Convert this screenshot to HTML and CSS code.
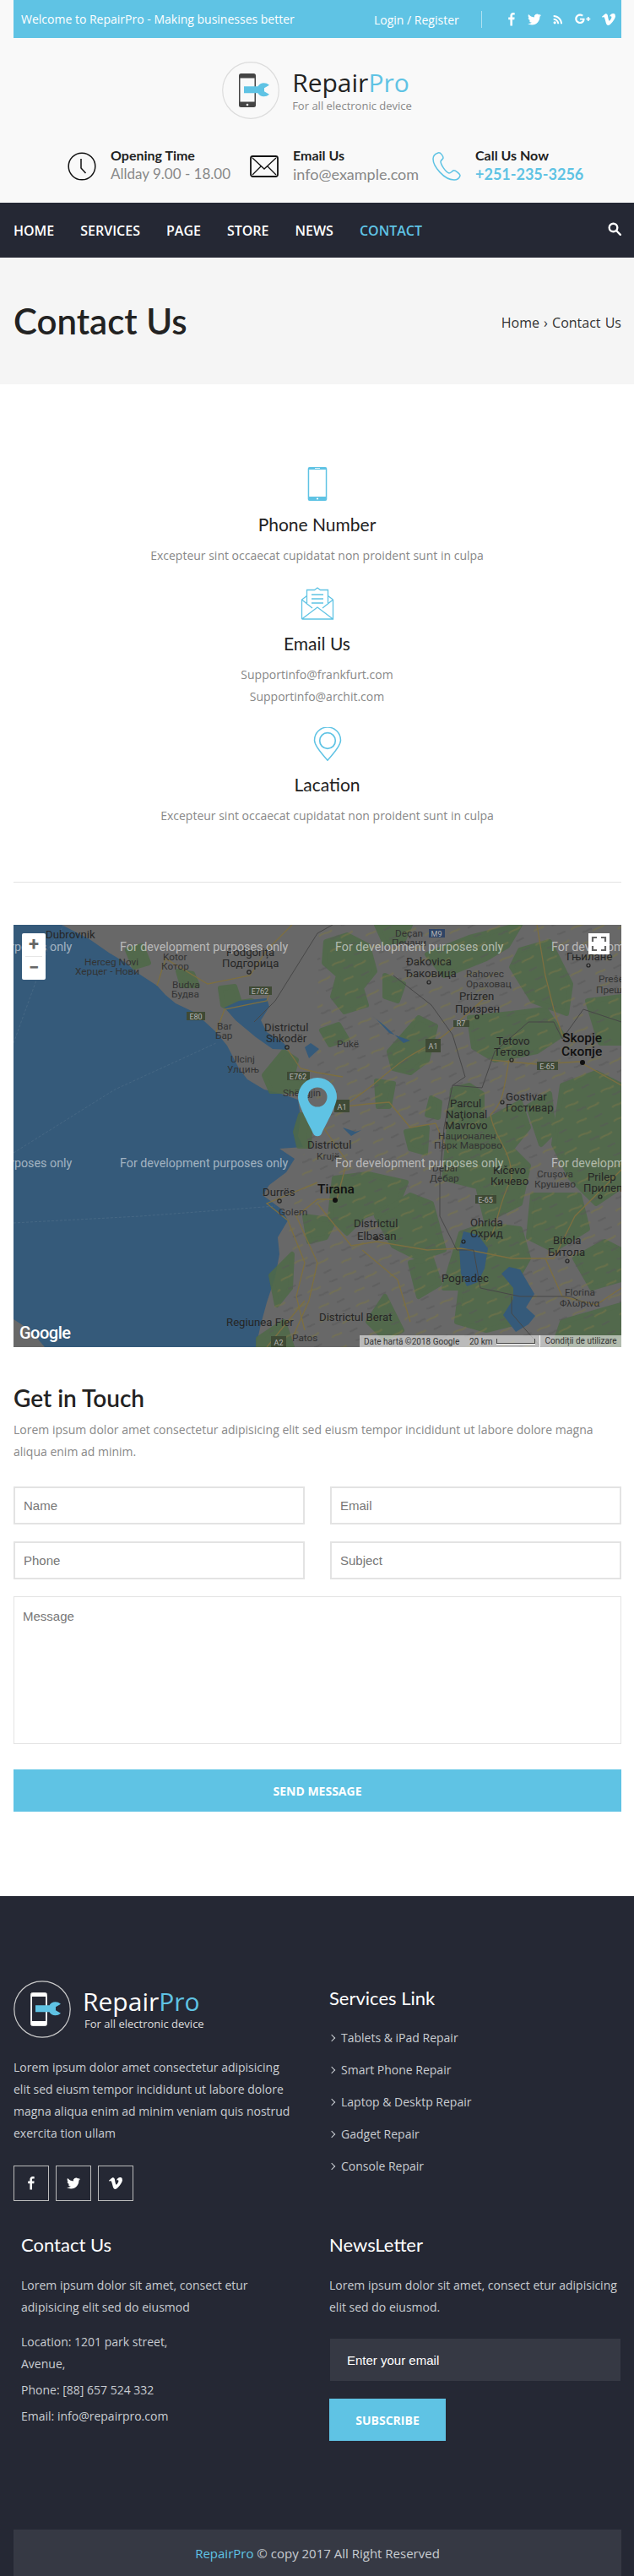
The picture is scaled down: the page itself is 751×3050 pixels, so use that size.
FILE: index.html
```html
<!DOCTYPE html>
<html lang="en">
<head>
  <meta charset="UTF-8" />
  <meta name="viewport" content="width=device-width, initial-scale=1.0"/>
  <title>RepairPro - Contact Us</title>
  <link rel="stylesheet" href="styles.css">
</head>
<body>

  <!-- Shared icons -->
  <svg class="defs" width="0" height="0">
    <symbol id="i-fb" viewBox="0 0 16 16"><path d="M9 8.200h2.300l.3-2.700H9V3.900c0-.8.2-1.300 1.300-1.300h1.400V.2C11.400.2 10.600.1 9.700.1 7.800.1 6.400 1.300 6.400 3.500v2H4.200v2.700h2.200v7.300H9z"/></symbol>
    <symbol id="i-tw" viewBox="0 0 24 24"><path d="M23.950 4.570a10 10 0 0 1-2.820.77 4.960 4.960 0 0 0 2.160-2.720c-.95.55-2 .96-3.120 1.190a4.920 4.920 0 0 0-8.380 4.480C7.690 8.100 4.070 6.130 1.640 3.160a4.820 4.820 0 0 0-.66 2.480c0 1.710.87 3.210 2.190 4.100a4.900 4.900 0 0 1-2.230-.62v.06a4.920 4.920 0 0 0 3.950 4.830 5 5 0 0 1-2.210.08 4.940 4.940 0 0 0 4.600 3.420A9.870 9.870 0 0 1 0 19.540a14 14 0 0 0 7.560 2.210c9.050 0 14-7.500 14-13.980 0-.21 0-.42-.02-.63a9.940 9.940 0 0 0 2.460-2.550z"/></symbol>
    <symbol id="i-vm" viewBox="0 0 24 24"><path d="M23.980 6.400c-.1 2.340-1.730 5.540-4.890 9.610-3.270 4.240-6.030 6.360-8.290 6.360-1.400 0-2.580-1.290-3.550-3.870L5.310 11.400C4.590 8.820 3.820 7.530 3 7.530c-.18 0-.81.38-1.880 1.130L0 7.210c1.180-1.040 2.340-2.080 3.490-3.120C5.060 2.730 6.240 2.010 7.030 1.940c1.860-.18 3 1.090 3.430 3.800.46 2.750.78 4.460.96 5.130.54 2.440 1.130 3.660 1.770 3.660.5 0 1.250-.79 2.250-2.360 1-1.580 1.530-2.780 1.600-3.600.14-1.360-.4-2.040-1.600-2.040-.57 0-1.150.13-1.750.39 1.160-3.810 3.380-5.660 6.660-5.550 2.430.07 3.580 1.650 3.430 4.730z"/></symbol>
    <symbol id="i-wrench" viewBox="0 0 68 68"><path d="M26 29.300h16.500c1.500-2.500 4-4 7-4 2.500 0 4.500.8 6.500 2.500l-6 3.500v4l6 3.500c-2 1.700-4 2.500-6.500 2.500-3 0-5.500-1.500-7-4H26z"/></symbol>
  </svg>

  <!-- Header -->
  <header class="site-header">
    <div class="topbar">
      <span class="topbar-text">Welcome to RepairPro - Making businesses better</span>
      <a class="topbar-login">Login / Register</a>
      <div class="topbar-social">
        <svg class="soc soc-f"><use href="#i-fb"/></svg>
        <svg class="soc soc-t"><use href="#i-tw"/></svg>
        <svg class="soc soc-r" viewBox="0 0 24 24"><circle cx="6.200" cy="17.800" r="2.400"/><path d="M4 4.400v3c7 0 12.600 5.600 12.600 12.600h3C19.600 11.400 12.600 4.400 4 4.400zm0 5.700v3c3.800 0 6.900 3.100 6.900 6.900h3c0-5.500-4.400-9.900-9.900-9.900z"/></svg>
        <svg class="soc soc-g" viewBox="0 0 24 24"><path d="M7.600 10.900v2.500h4.100c-.2 1-1.200 3-4.100 3-2.500 0-4.500-2-4.500-4.600s2-4.600 4.500-4.600c1.400 0 2.400.6 2.900 1.100l2-1.900C11.200 5.200 9.600 4.500 7.600 4.500 3.500 4.500.3 7.800.3 11.800s3.200 7.300 7.300 7.300c4.200 0 7-3 7-7.100 0-.5 0-.8-.1-1.100zM21 10.900V8.800h-2.100v2.100h-2.100V13h2.100v2.100H21V13h2.100v-2.100z"/></svg>
        <svg class="soc soc-v"><use href="#i-vm"/></svg>
      </div>
    </div>

    <div class="brand">
      <svg class="brand-logo" viewBox="0 0 68 68">
        <circle cx="34" cy="34" r="33.300" fill="none" stroke="#dcdcdc" stroke-width="1.200"/>
        <rect x="20" y="14" width="20" height="40" rx="2.500" fill="#444"/>
        <rect x="21.500" y="19.500" width="17" height="28" fill="#f9f9f9"/>
        <circle cx="30" cy="51" r="1.300" fill="#fff"/>
        <use href="#i-wrench" fill="#5fc3e4"/>
      </svg>
      <div>
        <div class="brand-name">Repair<span class="blue">Pro</span></div>
        <div class="brand-sub">For all electronic device</div>
      </div>
    </div>

    <div class="info-row">
      <div class="info-item">
        <svg class="info-icon" viewBox="0 0 34 34" fill="none" stroke="#111" stroke-width="1.500"><circle cx="17" cy="17" r="15.800"/><path d="M16 8v11l5.500 6"/></svg>
        <div>
          <div class="info-title">Opening Time</div>
          <div class="info-text info-hours">Allday 9.00 - 18.00</div>
        </div>
      </div>
      <div class="info-item">
        <svg class="info-icon" viewBox="0 0 34 34" fill="none" stroke="#111"><rect x="1" y="5" width="32" height="24" rx="2.500" stroke-width="1.800"/><path d="M3 7l14 13L31 7M3 27l10-10M31 27L21 17" stroke-width="1.300"/></svg>
        <div>
          <div class="info-title">Email Us</div>
          <div class="info-text">info@example.com</div>
        </div>
      </div>
      <div class="info-item info-call">
        <svg class="info-icon" viewBox="0 0 34 34" fill="none" stroke="#5fc3e4" stroke-width="1.500"><path d="M7 1C4 2 1 4 1 8c0 9 13 25 25 25 3 0 6-2 7-5 0-2-6-7-8-6-2 1-3 3-5 3-4-1-10-10-10-14 1-2 3-3 3-4 0-2-3-7-6-6z"/></svg>
        <div>
          <div class="info-title">Call Us Now</div>
          <div class="info-text info-phone">+251-235-3256</div>
        </div>
      </div>
    </div>
  </header>

  <!-- Nav -->
  <nav class="main-nav">
    <a>Home</a>
    <a>Services</a>
    <a>Page</a>
    <a>Store</a>
    <a>News</a>
    <a class="active">Contact</a>
    <svg class="nav-search" viewBox="0 0 16 16" fill="none" stroke="#fff" stroke-width="2.400"><circle cx="6.500" cy="6.500" r="4.800"/><path d="M10 10l4.800 4.800" stroke-linecap="round"/></svg>
  </nav>

  <!-- Page title -->
  <section class="page-title">
    <h1>Contact Us</h1>
    <div class="crumbs">Home &rsaquo; Contact Us</div>
  </section>

  <!-- Contact details -->
  <section class="contact-list">
    <div class="contact-item">
      <svg class="contact-icon" viewBox="0 0 40 40" fill="none" stroke="#5fc3e4">
        <rect x="8.700" y="0" width="22.600" height="40" rx="2" fill="#5fc3e4" stroke="none"/>
        <rect x="10.200" y="3" width="19.600" height="32" fill="#fff" stroke="none"/>
        <path d="M17 1.500h6" stroke="#fff" stroke-width=".8"/>
        <circle cx="20" cy="37.500" r="1.100" fill="#fff" stroke="none"/>
      </svg>
      <h3>Phone Number</h3>
      <p>Excepteur sint occaecat cupidatat non proident sunt in culpa</p>
    </div>
    <div class="contact-item">
      <svg class="contact-icon" viewBox="0 0 40 40" fill="none" stroke="#5fc3e4" stroke-width="1.300">
        <path d="M1.500 39V16l6-4.500M38.500 16v23H1.500M38.500 16l-6-4.500M1.500 16L14 26M38.500 16L26 26M1.500 39L20 25l18.500 14"/>
        <path d="M7.500 20V4.500h9L20 2l3.500 2.500h9V20"/>
        <path d="M13 10h14M13 15h14M13 20h14" stroke-width="1.700"/>
      </svg>
      <h3>Email Us</h3>
      <p>Supportinfo@frankfurt.com<br>Supportinfo@archit.com</p>
    </div>
    <div class="contact-item contact-shift">
      <svg class="contact-icon" viewBox="0 0 40 40" fill="none" stroke="#5fc3e4" stroke-width="1.500">
        <path d="M20 39.200C15 33 4.500 23 4.500 15.500a15.500 15.500 0 0 1 31 0C35.500 23 25 33 20 39.200z"/>
        <circle cx="20" cy="16" r="9.300" stroke-width="1.700"/>
      </svg>
      <h3>Lacation</h3>
      <p>Excepteur sint occaecat cupidatat non proident sunt in culpa</p>
    </div>
  </section>

  <hr class="rule">

  <!-- Map -->
  <section class="map">
    <svg class="map-art" viewBox="0 0 720 500" width="720" height="500">
      <defs>
        <pattern id="terrain" width="46" height="38" patternUnits="userSpaceOnUse" patternTransform="rotate(-24)">
          <path d="M3 8c6-4 11 2 17-1M26 20c5-3 9 1 16-2M8 30c4-3 9 1 13-1" fill="none" stroke="#7a7648" stroke-width="2"/>
          <path d="M14 16c5 2 8-1 12 1M32 6c3 2 6 0 10 1M30 32c4 1 7-1 10 0" fill="none" stroke="#585858" stroke-width="2"/>
        </pattern>
      </defs>
      <rect width="720" height="500" fill="#355a7a"/>
      <!-- land -->
      <path fill="#686868" d="M57 0L90 17 113 33 133 45 147 57 170 72 180 83 192 93 213 103 227 115 240 127 253 143 267 170 277 183 297 195 317 200 337 207 340 227 337 250 343 263 315 265 333 277 323 293 303 308 295 320 318 337 325 350 313 370 315 390 310 417 300 447 293 473 287 500 720 500 720 0z"/>
      <path fill="#686868" d="M0 467L20 480 37 500 0 500z"/>
      <!-- green -->
      <g class="green">
        <path d="M370 20L395 12 420 25 428 55 412 75 418 95 392 103 378 85 385 60 368 45z"/>
        <path d="M430 0L470 0 462 18 440 22z"/>
        <path d="M297 178L320 150 335 160 330 180 345 185 335 197 305 197z"/>
        <path d="M245 75L262 73 268 92 282 90 290 95 265 105 248 95z"/>
        <path d="M135 30L152 25 160 45 143 50z"/>
        <path d="M195 55L212 58 218 72 200 72z"/>
        <path d="M340 225L352 228 350 262 338 262 334 245z"/>
        <path d="M305 415L330 390 328 430 312 450z"/>
        <path d="M290 490L320 470 330 500 290 500z"/>
        <path d="M430 185L450 188 445 215 432 215z"/>
        <path d="M495 205L505 210 503 228 490 225z"/>
        <path d="M465 245L490 240 488 270 470 265z"/>
        <path d="M380 300L420 295 465 305 455 330 415 345 395 365 375 345z"/>
        <path d="M345 345L380 350 370 370 350 375z"/>
        <path d="M430 345L470 320 495 330 510 385 480 395 450 380z"/>
        <path d="M445 150L480 110 500 120 490 160 470 175 450 170z"/>
        <path d="M520 195L540 190 555 200 555 235 600 210 610 240 590 265 610 285 600 330 560 350 550 310 510 300 515 250z"/>
        <path d="M540 110L590 105 630 100 650 130 620 150 570 160 545 145z"/>
        <path d="M600 30L635 20 660 70 655 105 615 90 590 50z"/>
        <path d="M490 35L540 15 600 0 585 25 560 40 510 60z"/>
        <path d="M650 190L690 175 720 190 720 310 690 330 660 300 640 260z"/>
        <path d="M615 320L670 320 680 360 640 385 610 370z"/>
        <path d="M530 365L560 355 600 360 610 395 590 430 600 470 560 480 525 470 530 430 510 430z"/>
        <path d="M650 470L720 450 720 500 640 500z"/>
        <path d="M680 90L720 85 720 140 695 140z"/>
        <path d="M420 470L440 440 460 480 440 490z"/>
        <path d="M610 215L635 200 640 245 625 260z"/>
        <path d="M440 60L462 70 455 90 440 85z"/>
        <path d="M365 125L385 118 395 135 375 142z"/>
        <path d="M470 400L495 395 505 425 480 440z"/>
        <path d="M665 395L700 375 720 385 720 420 685 430z"/>
      </g>
      <!-- relief -->
      <path fill="url(#terrain)" opacity=".55" d="M360 0H720V500H300L345 265 360 200z"/>
      <!-- lakes -->
      <g fill="#355a7a">
        <path d="M250 98L267 90 300 87 303 97 293 113 300 127 320 140 327 148 307 147 287 133 263 113z"/>
        <path d="M533 363L550 367 562 383 558 407 550 423 537 428 530 413 528 383z"/>
        <path d="M587 405L600 408 617 437 607 453 618 463 610 473 595 482 580 462 592 443 592 430 578 413z"/>
        <path d="M390 240L405 245 412 243 400 250z"/>
        <path d="M345 145L352 140 362 147 350 158z"/>
        <path d="M425 108L438 118 462 140 470 137 445 128 430 112z"/>
      </g>
      <!-- roads -->
      <g fill="none" stroke="#7d6f40" stroke-width="1.300">
        <path d="M393 213C430 190 445 170 470 155S510 135 530 112L560 85"/>
        <path d="M393 215L420 212 445 210 470 240 500 235 515 270"/>
        <path d="M360 230L395 280 383 325 360 325 335 345 360 400 350 445 330 490"/>
        <path d="M360 330L400 380 430 375 490 385 530 383 590 395 640 395 665 345 720 290"/>
        <path d="M565 160L620 165 670 162 720 190"/>
        <path d="M587 160C580 200 580 210 565 225 570 255 590 265 590 300 570 340 575 360 560 375"/>
        <path d="M630 395L650 440 690 450 720 430"/>
        <path d="M620 0L630 60 640 100 650 130 665 140"/>
        <path d="M170 72L180 40 230 70 280 60 300 30 330 0"/>
        <path d="M240 127L250 100 300 90 305 75"/>
        <path d="M323 145L340 170 360 175 390 180"/>
        <path d="M360 305L300 330 325 350 345 400 335 440 345 480"/>
        <path d="M345 445L300 500"/>
        <path d="M413 385L455 420 470 470"/>
      </g>
      <!-- borders -->
      <g fill="none" stroke="#474747" stroke-width="1">
        <path d="M285 115L310 90 360 10 378 0"/>
        <path d="M450 60L495 95 520 130 535 180 520 190 555 193 570 150 610 115 640 115 650 135 675 100 720 115"/>
        <path d="M520 190L510 240 505 300 505 345 525 385 545 385 553 430 600 440 630 440 660 440 680 450"/>
        <path d="M590 440L590 460 607 480 625 500"/>
      </g>
      <g fill="none" stroke="#4a6b86" stroke-width=".8" stroke-dasharray="3 2">
        <path d="M0 140L40 30 60 0"/>
        <path d="M0 270L120 195 240 140"/>
        <path d="M0 353L150 345 310 333"/>
      </g>

      <!-- shields -->
      <g class="shield">
        <rect x="279" y="73" width="27" height="10"/><rect x="205" y="103" width="22" height="10"/>
        <rect x="324" y="174" width="27" height="10"/><rect x="488" y="135" width="18" height="16"/>
        <rect x="380" y="207" width="18" height="15"/><rect x="521" y="113" width="19" height="8"/>
        <rect x="620" y="162" width="25" height="10"/><rect x="547" y="320" width="25" height="10"/>
        <rect x="305" y="487" width="18" height="13"/><rect class="shield-blue" x="492" y="5" width="19" height="10"/>
      </g>
      <g class="shield-text">
        <text x="292" y="82">E762</text><text x="216" y="112">E80</text><text x="337" y="183">E762</text>
        <text x="497" y="147">A1</text><text x="389" y="219">A1</text><text x="530" y="120">R7</text>
        <text x="632" y="171">E-65</text><text x="559" y="329">E-65</text><text x="314" y="498">A2</text><text x="501" y="14">M9</text>
      </g>

      <!-- labels -->
      <g class="lbl">
        <text x="84" y="48">Herceg Novi</text><text x="73" y="59">Херцег - Нови</text>
        <text x="177" y="42">Kotor</text><text x="175" y="53">Котор</text><text x="188" y="75">Budva</text><text x="187" y="86">Будва</text>
        <text x="241" y="124">Bar</text><text x="239" y="135">Бар</text><text x="257" y="163">Ulcinj</text>
        <text x="253" y="175">Улцињ</text><text x="319" y="203">Shëngjin</text><text x="314" y="344">Golem</text>
        <text x="330" y="493">Patos</text><text x="359" y="278">Krujë</text>
        <text x="452" y="14">Deçan</text><text x="448" y="25">Печани</text><text x="536" y="62">Rahovec</text>
        <text x="536" y="74">Ораховац</text><text x="383" y="145">Pukë</text>
        <text x="503" y="254">Национален</text><text x="498" y="265">Парк Маврово</text><text x="496" y="292">Debar</text>
        <text x="493" y="304">Дебар</text><text x="620" y="299">Crușova</text><text x="617" y="311">Крушево</text>
        <text x="653" y="439">Florina</text><text x="647" y="452">Φλώρινα</text>
        <text x="693" y="68">Preševo</text><text x="690" y="81">Прешево</text>
      </g>
      <g class="lbl lbl-mid">
        <text x="38" y="16">Dubrovnik</text><text x="252" y="37">Podgorița</text><text x="247" y="50">Подгорица</text>
        <text x="348" y="265">Districtul</text><text x="572" y="142">Tetovo</text><text x="569" y="155">Тетово</text>
        <text x="583" y="208">Gostivar</text><text x="583" y="221">Гостивар</text><text x="517" y="216">Parcul</text>
        <text x="512" y="229">Naţional</text><text x="511" y="242">Mavrovo</text><text x="568" y="295">Kičevo</text>
        <text x="565" y="308">Кичево</text><text x="680" y="303">Prilep</text><text x="675" y="316">Прилеп</text>
        <text x="541" y="357">Ohrida</text><text x="541" y="370">Охрид</text><text x="639" y="378">Bitola</text>
        <text x="633" y="392">Битола</text><text x="507" y="423">Pogradec</text><text x="655" y="42">Гњилане</text>
        <text x="252" y="475">Regiunea Fier</text><text x="362" y="469">Districtul Berat</text><text x="403" y="358">Districtul</text>
        <text x="407" y="373">Elbasan</text><text x="465" y="48">Đakovica</text><text x="463" y="62">Ђаковица</text>
        <text x="528" y="89">Prizren</text><text x="523" y="104">Призрен</text><text x="297" y="126">Districtul</text>
        <text x="299" y="139">Shkodër</text><text x="295" y="321">Durrës</text>
      </g>
      <g class="lbl-big">
        <text x="650" y="139">Skopje</text><text x="649" y="155">Скопје</text><text x="360" y="318">Tirana</text>
      </g>
      <g fill="none" stroke="#222" stroke-width="1.200">
        <circle cx="279" cy="56" r="2.200"/><circle cx="324" cy="145" r="2.200"/><circle cx="315" cy="327" r="2.200"/>
        <circle cx="492" cy="68" r="2"/><circle cx="549" cy="109" r="2"/><circle cx="590" cy="160" r="2"/>
        <circle cx="579" cy="210" r="2"/><circle cx="430" cy="371" r="2"/><circle cx="656" cy="398" r="2"/>
        <circle cx="681" cy="48" r="2"/><circle cx="695" cy="322" r="2"/><circle cx="533" cy="375" r="2"/>
      </g>
      <g fill="#111"><circle cx="674" cy="163" r="3"/><circle cx="381" cy="326" r="3"/></g>

      <!-- watermark -->
      <g class="watermark">
        <text x="-130" y="31">For development purposes only</text><text x="126" y="31">For development purposes only</text>
        <text x="381" y="31">For development purposes only</text><text x="637" y="31">For development purposes only</text>
        <text x="-130" y="287">For development purposes only</text><text x="126" y="287">For development purposes only</text>
        <text x="381" y="287">For development purposes only</text><text x="637" y="287">For development purposes only</text>
      </g>

      <!-- pin -->
      <path fill="#5fc3e4" fill-rule="evenodd" d="M360 181a23 23 0 0 1 23 23c0 10-15 36-18 43a5.500 5.500 0 0 1-10 0c-3-7-18-33-18-43a23 23 0 0 1 23-23zM360 192.500a11.500 11.500 0 1 0 0 23 11.500 11.500 0 1 0 0-23z"/>
    </svg>

    <div class="map-zoom">
      <span class="map-zoom-btn">+</span>
      <span class="map-zoom-btn map-zoom-minus">&minus;</span>
    </div>
    <div class="map-full">
      <svg viewBox="0 0 25 25" width="25" height="25" fill="none" stroke="#666" stroke-width="2.200"><path d="M5 10V5h5M15 5h5v5M20 15v5h-5M10 20H5v-5"/></svg>
    </div>
    <div class="map-google">Google</div>
    <div class="map-attr">
      <span class="map-date">Date hartă ©2018 Google</span>
      <span class="map-scale">20 km<i class="map-scale-bar"></i></span>
      <span class="map-terms">Condiții de utilizare</span>
    </div>
  </section>

  <!-- Form -->
  <section class="touch">
    <h2>Get in Touch</h2>
    <p>Lorem ipsum dolor amet consectetur adipisicing elit sed eiusm tempor incididunt ut labore dolore magna aliqua enim ad minim.</p>
    <form class="touch-form">
      <input type="text" placeholder="Name" />
      <input type="text" placeholder="Email" />
      <input type="text" placeholder="Phone" />
      <input type="text" placeholder="Subject" />
      <textarea placeholder="Message"></textarea>
      <button type="button">SEND MESSAGE</button>
    </form>
  </section>

  <!-- Footer -->
  <footer class="site-footer">
    <div class="foot-grid">
      <div>
        <div class="foot-brand">
          <svg class="brand-logo" viewBox="0 0 68 68">
            <circle cx="34" cy="34" r="33.200" fill="none" stroke="#ccc" stroke-width="1.200"/>
            <rect x="20.500" y="14.500" width="19" height="39" rx="2" fill="#fff" stroke="#ddd"/>
            <rect x="22" y="19" width="16" height="29" fill="#252834"/>
            <use href="#i-wrench" fill="#5fc3e4"/>
          </svg>
          <div>
            <div class="brand-name foot-name">Repair<span class="blue">Pro</span></div>
            <div class="brand-sub foot-sub">For all electronic device</div>
          </div>
        </div>
        <p class="foot-about">Lorem ipsum dolor amet consectetur adipisicing elit sed eiusm tempor incididunt ut labore dolore magna aliqua enim ad minim veniam quis nostrud exercita tion ullam</p>
        <div class="foot-social">
          <a><svg class="fs-icon"><use href="#i-fb"/></svg></a>
          <a><svg class="fs-icon"><use href="#i-tw"/></svg></a>
          <a><svg class="fs-icon"><use href="#i-vm"/></svg></a>
        </div>
      </div>
      <div class="foot-links">
        <h4>Services Link</h4>
        <ul>
          <li>Tablets &amp; iPad Repair</li>
          <li>Smart Phone Repair</li>
          <li>Laptop &amp; Desktp Repair</li>
          <li>Gadget Repair</li>
          <li>Console Repair</li>
        </ul>
      </div>
      <div class="foot-contact">
        <h4>Contact Us</h4>
        <p class="foot-para">Lorem ipsum dolor sit amet, consect etur adipisicing elit sed do eiusmod</p>
        <p class="foot-addr">Location: 1201 park street,<br>Avenue,</p>
        <p class="foot-line">Phone: [88] 657 524 332</p>
        <p class="foot-line">Email: info@repairpro.com</p>
      </div>
      <div>
        <h4>NewsLetter</h4>
        <p class="foot-para">Lorem ipsum dolor sit amet, consect etur adipisicing elit sed do eiusmod.</p>
        <input class="news-input" type="text" placeholder="Enter your email" />
        <button class="news-btn" type="button">SUBSCRIBE</button>
      </div>
    </div>
    <div class="copyright"><span class="blue">RepairPro</span> © copy 2017 All Right Reserved</div>
  </footer>

</body>
</html>
```

FILE: styles.css
```css
body {
  margin: 0;
  width: 751px;
  font-family: "Open Sans", Arial, sans-serif;
  font-size: 14px;
  color: #888;
  background: #fff;
}

h1, h2, h3, h4, p, ul {
  margin: 0;
  padding: 0;
}

.defs {
  position: absolute;
}

.blue {
  color: #5fc3e4;
}

/* Header */
.site-header {
  background: #f9f9f9;
  height: 240px;
}

.topbar {
  margin: 0 15px 0 16px;
  height: 45px;
  background: #5fc3e4;
  color: #fff;
  display: flex;
  align-items: center;
  padding-left: 9px;
  box-sizing: border-box;
}

.topbar-text {
  width: 418px;
  white-space: nowrap;
}

.topbar-login {
  width: 127px;
  height: 20px;
  line-height: 21px;
  white-space: nowrap;
  border-right: 1px solid rgba(255,255,255,.5);
}

.topbar-social {
  display: flex;
  align-items: center;
  margin-left: 27px;
  fill: #fff;
}

.soc {
  width: 16px;
  height: 16px;
}

.soc-t { margin-left: 11px; }
.soc-r { margin-left: 12px; }
.soc-g { margin-left: 12px; width: 19px; height: 19px; }
.soc-v { margin-left: 13px; }

.brand {
  display: flex;
  justify-content: center;
  align-items: center;
  gap: 15px;
  padding-top: 28px;
}

.brand-logo {
  width: 68px;
  height: 68px;
  flex: none;
}

.brand-name {
  font-size: 30px;
  line-height: 36px;
  color: #222;
}

.brand-sub {
  font-size: 13px;
  line-height: 18px;
  color: #888;
}

.info-row {
  display: flex;
  padding: 32px 0 0 80px;
}

.info-item {
  display: flex;
  align-items: center;
  width: 216px;
  gap: 17px;
}

.info-icon {
  width: 34px;
  height: 34px;
  flex: none;
  margin-top: 3px;
}

.info-title {
  font-family: Lato, sans-serif;
  font-size: 16px;
  font-weight: 700;
  line-height: 22px;
  color: #222;
}

.info-text {
  font-family: Lato, sans-serif;
  font-size: 18px;
  line-height: 22px;
  color: #888;
}

.info-hours {
  font-size: 17px;
}

.info-phone {
  color: #5fc3e4;
  font-weight: 700;
}

/* Nav */
.main-nav {
  height: 65px;
  background: #252834;
  display: flex;
  align-items: center;
  gap: 31px;
  padding: 0 15px 0 16px;
}

.main-nav a {
  color: #fff;
  font-size: 16px;
  font-weight: 600;
  text-transform: uppercase;
}

.main-nav a.active {
  color: #5fc3e4;
}

.nav-search {
  width: 16px;
  height: 16px;
  margin: -3px 0 0 auto;
}

/* Page title */
.page-title {
  height: 150px;
  background: #f5f5f5;
  display: flex;
  align-items: center;
  justify-content: space-between;
  padding: 0 15px 0 16px;
}

.page-title h1 {
  font-family: Lato, sans-serif;
  font-size: 42px;
  font-weight: 600;
  color: #222;
}

.crumbs {
  margin-top: 3px;
  font-size: 16px;
  word-spacing: 1px;
  color: #333;
}

/* Contact details */
.contact-list {
  padding-top: 98px;
  text-align: center;
}

.contact-item {
  margin-bottom: 23px;
}

.contact-shift {
  margin-left: 24px;
}

.contact-icon {
  display: block;
  width: 40px;
  height: 40px;
  margin: 0 auto 13px;
}

.contact-item h3 {
  font-family: Lato, sans-serif;
  font-size: 21px;
  font-weight: 400;
  line-height: 30px;
  color: #222;
  margin-bottom: 9px;
}

.contact-item p {
  line-height: 26px;
}

.rule {
  margin: 65px 15px 50px 16px;
  border: 0;
  border-top: 1px solid #e3e3e3;
}

/* Map */
.map {
  position: relative;
  width: 720px;
  height: 500px;
  margin-left: 16px;
  overflow: hidden;
}

.map-art {
  display: block;
}

.map-art text {
  font-family: Roboto, sans-serif;
}

.green {
  fill: #4f6a48;
  stroke: #4f6a48;
  stroke-width: 6;
  stroke-linejoin: round;
  opacity: .85;
}

.lbl {
  font-size: 11.800px;
  fill: #333;
}

.lbl-mid {
  font-size: 13.200px;
  fill: #262626;
}

.lbl-big {
  font-size: 15.500px;
  font-weight: 500;
  fill: #111;
}

.watermark {
  font-size: 14.300px;
  fill: rgba(255,255,255,.55);
}

.shield rect {
  fill: #3f4a35;
}

.shield .shield-blue {
  fill: #2f4466;
}

.shield-text {
  font-size: 9px;
  text-anchor: middle;
  fill: #b5b5b5;
}

.map-zoom {
  position: absolute;
  top: 10px;
  left: 10px;
  width: 28px;
  height: 55px;
  background: #fff;
  border-radius: 2px;
  font-family: Roboto, sans-serif;
  font-weight: 700;
  color: #666;
  text-align: center;
}

.map-zoom-btn {
  display: block;
  height: 27px;
  font-size: 22px;
  line-height: 26px;
}

.map-zoom-minus {
  margin: 0 4px;
  border-top: 1px solid #e6e6e6;
}

.map-full {
  position: absolute;
  top: 10px;
  left: 681px;
  width: 25px;
  height: 25px;
  background: #fff;
}

.map-full svg {
  display: block;
}

.map-google {
  position: absolute;
  left: 7px;
  bottom: 5px;
  font-family: Roboto, sans-serif;
  font-size: 20px;
  font-weight: 500;
  letter-spacing: -.5px;
  color: #fff;
}

.map-attr {
  position: absolute;
  right: 0;
  bottom: 0;
  width: 310px;
  height: 14px;
  box-sizing: border-box;
  padding-left: 5px;
  background: rgba(255,255,255,.55);
  display: flex;
  align-items: center;
  font-family: Roboto, sans-serif;
  font-size: 10px;
  color: #333;
  white-space: nowrap;
}

.map-date {
  width: 125px;
}

.map-scale {
  display: flex;
  align-items: center;
}

.map-scale-bar {
  display: block;
  width: 44px;
  height: 5px;
  margin-left: 4px;
  border: 1px solid #444;
  border-top: 0;
  box-shadow: 0 1px 0 #fff;
}

.map-terms {
  margin-left: 5px;
  padding-left: 6px;
  border-left: 1px solid #fff;
  line-height: 14px;
}

/* Form */
.touch {
  padding: 40px 15px 100px 16px;
}

.touch h2 {
  font-family: Lato, sans-serif;
  font-size: 28px;
  font-weight: 600;
  line-height: 40px;
  color: #222;
  margin-bottom: 5px;
}

.touch p {
  line-height: 26px;
  margin-bottom: 28px;
}

.touch-form {
  display: grid;
  grid-template-columns: 345px 345px;
  gap: 20px 30px;
}

.touch-form input,
.touch-form textarea {
  box-sizing: border-box;
  display: block;
  margin: 0;
  width: 100%;
  height: 45px;
  padding: 0 10px;
  border: 2px solid #e3e3e3;
  border-radius: 0;
  font-family: "Liberation Sans", Arial, sans-serif;
  font-size: 15px;
  background: #fff;
}

.touch-form input::placeholder,
.touch-form textarea::placeholder {
  color: #777;
}

.touch-form textarea {
  grid-column: 1 / 3;
  height: 175px;
  padding: 14px 10px;
  border-width: 1px;
  resize: none;
}

.touch-form button {
  grid-column: 1 / 3;
  height: 50px;
  margin-top: 10px;
  border: 0;
  background: #5fc3e4;
  color: #fff;
  font-family: "Open Sans", sans-serif;
  font-size: 14px;
  font-weight: 700;
}

/* Footer */
.site-footer {
  background: #252834;
  color: #c9cdd2;
  height: 805px;
}

.foot-grid {
  display: grid;
  grid-template-columns: 374px 346px;
  align-content: start;
  row-gap: 37px;
  padding: 100px 0 0 16px;
  height: 650px;
  box-sizing: border-box;
}

.foot-brand {
  display: flex;
  align-items: center;
  gap: 14px;
}

.foot-name {
  color: #fff;
  line-height: 34px;
}

.foot-sub {
  color: #ddd;
  margin-left: 2px;
}

.foot-about {
  margin-top: 22px;
  width: 335px;
  line-height: 26px;
}

.foot-social {
  display: flex;
  gap: 8px;
  margin-top: 25px;
}

.foot-social a {
  display: flex;
  align-items: center;
  justify-content: center;
  width: 42px;
  height: 42px;
  box-sizing: border-box;
  border: 1px solid #bbb;
}

.fs-icon {
  width: 16px;
  height: 16px;
  fill: #fff;
}

.site-footer h4 {
  font-family: Lato, sans-serif;
  font-size: 22px;
  font-weight: 400;
  line-height: 30px;
  color: #fff;
}

.foot-links {
  padding-top: 6px;
}

.foot-links ul {
  list-style: none;
  margin-top: 13px;
}

.foot-links li {
  position: relative;
  padding-left: 14px;
  line-height: 38px;
}

.foot-links li::before {
  content: "";
  position: absolute;
  left: 0;
  top: 16px;
  width: 5px;
  height: 5px;
  border-top: 1px solid #c9cdd2;
  border-right: 1px solid #c9cdd2;
  transform: rotate(45deg);
}

.foot-contact {
  padding-left: 9px;
  width: 300px;
}

.foot-para {
  margin-top: 20px;
  line-height: 26px;
}

.foot-addr {
  margin-top: 15px;
  line-height: 26px;
}

.foot-line {
  margin-top: 5px;
  line-height: 26px;
}

.news-input {
  display: block;
  box-sizing: border-box;
  width: 344px;
  height: 50px;
  margin: 24px 0 0 1px;
  padding: 0 20px;
  border: 0;
  background: #363944;
  color: #fff;
  font-family: "Liberation Sans", Arial, sans-serif;
  font-size: 15px;
}

.news-input::placeholder {
  color: #fff;
  opacity: 1;
}

.news-btn {
  display: block;
  width: 138px;
  height: 50px;
  margin-top: 21px;
  border: 0;
  background: #5fc3e4;
  color: #fff;
  font-family: "Open Sans", sans-serif;
  font-size: 14px;
  font-weight: 700;
}

.copyright {
  margin: 100px 15px 0 16px;
  height: 55px;
  line-height: 56px;
  background: #363944;
  text-align: center;
  font-size: 15px;
}
```
